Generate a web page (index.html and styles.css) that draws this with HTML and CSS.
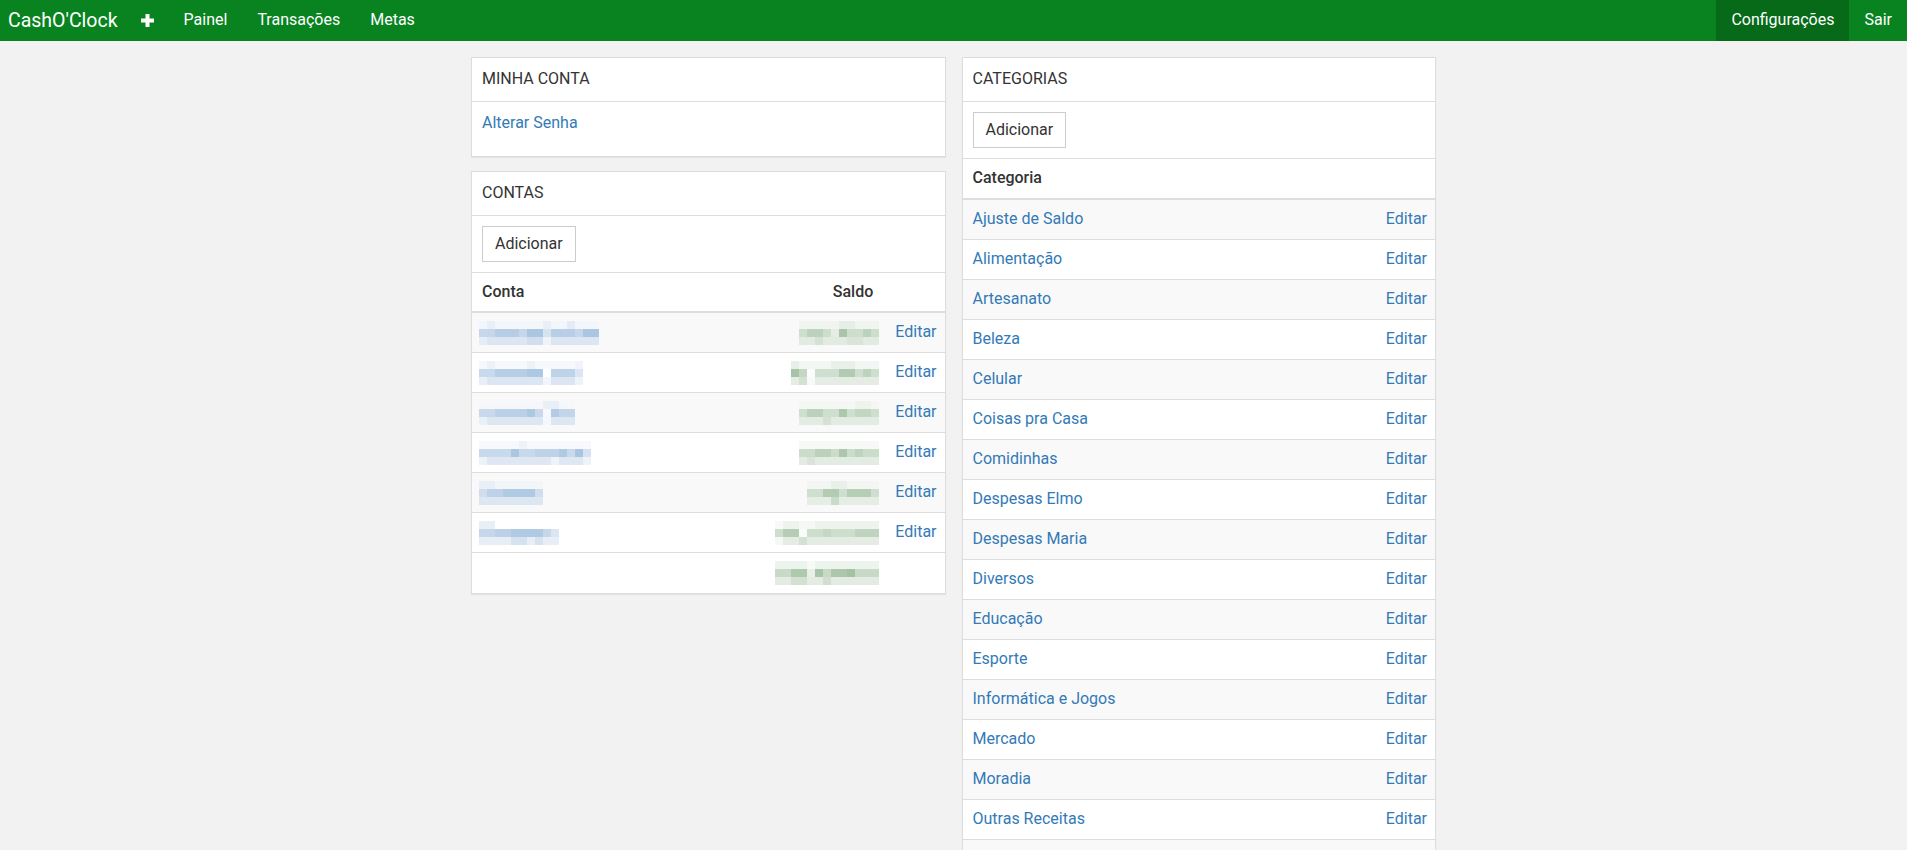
FILE: index.html
```html
<!DOCTYPE html>
<html lang="pt-BR">
<head>
<meta charset="utf-8">
<title>CashO'Clock - Configurações</title>
<link rel="stylesheet" href="styles.css">
</head>
<body>
<nav class="navbar">
  <a class="brand" href="#">CashO'Clock</a>
  <a class="nav-link nav-plus" href="#" aria-label="Novo">
    <svg width="13" height="13" viewBox="0 0 13 13"><rect x="0" y="4.5" width="13" height="4" fill="#fff"/><rect x="4.5" y="0" width="4" height="13" fill="#fff"/></svg>
  </a>
  <a class="nav-link" href="#">Painel</a>
  <a class="nav-link" href="#">Transações</a>
  <a class="nav-link" href="#">Metas</a>
  <div class="nav-right">
    <a class="nav-link active" href="#">Configurações</a>
    <a class="nav-link" href="#">Sair</a>
  </div>
</nav>

<main class="container">
  <div class="col">
    <section class="panel">
      <div class="panel-heading">MINHA CONTA</div>
      <div class="panel-body">
        <p class="body-line"><a href="#">Alterar Senha</a></p>
      </div>
    </section>

    <section class="panel">
      <div class="panel-heading">CONTAS</div>
      <div class="panel-body body-btn">
        <button class="btn">Adicionar</button>
      </div>
      <table class="table">
        <thead>
          <tr><th class="c-name">Conta</th><th class="c-num">Saldo</th><th class="c-act"></th></tr>
        </thead>
        <tbody>
          <tr>
            <td class="c-name"><svg class="px" width="120" height="24"><rect y="0" width="120" height="8" fill="#f3f6fa"/><rect x="8" y="0" width="8" height="8" fill="#e9eff7"/><rect x="64" y="0" width="8" height="8" fill="#e9eff7"/><rect x="88" y="0" width="8" height="8" fill="#e3ebf4"/><rect y="8" width="120" height="8" fill="#c6d7eb"/><rect x="16" y="8" width="24" height="8" fill="#b6cde5"/><rect x="48" y="8" width="16" height="8" fill="#aac6e1"/><rect x="64" y="8" width="8" height="8" fill="#d7e3ef"/><rect x="72" y="8" width="24" height="8" fill="#b8cee6"/><rect x="104" y="8" width="16" height="8" fill="#aac6e1"/><rect y="16" width="120" height="8" fill="#dce6f2"/><rect x="0" y="16" width="8" height="8" fill="#e6edf6"/><rect x="64" y="16" width="8" height="8" fill="#eef3f9"/><rect x="48" y="16" width="16" height="8" fill="#d0deed"/></svg></td>
            <td class="c-num"><svg class="px" width="80" height="24"><rect y="0" width="80" height="8" fill="#f1f5f1"/><rect x="40" y="0" width="16" height="8" fill="#e6eee6"/><rect y="8" width="80" height="8" fill="#cddecd"/><rect x="8" y="8" width="16" height="8" fill="#bcd2bc"/><rect x="32" y="8" width="8" height="8" fill="#e5ede5"/><rect x="40" y="8" width="8" height="8" fill="#a9c5a9"/><rect x="64" y="8" width="8" height="8" fill="#bcd2bc"/><rect y="16" width="80" height="8" fill="#e2ebe2"/><rect x="16" y="16" width="8" height="8" fill="#d4e2d4"/><rect x="48" y="16" width="16" height="8" fill="#d8e5d8"/></svg></td>
            <td class="c-act"><a href="#">Editar</a></td>
          </tr>
          <tr>
            <td class="c-name"><svg class="px" width="104" height="24"><rect y="0" width="104" height="8" fill="#f6f8fb"/><rect x="8" y="0" width="8" height="8" fill="#edf2f8"/><rect x="48" y="0" width="8" height="8" fill="#edf2f8"/><rect x="96" y="0" width="8" height="8" fill="#f0f4f9"/><rect y="8" width="104" height="8" fill="#c8d9eb"/><rect x="16" y="8" width="32" height="8" fill="#b7cee6"/><rect x="48" y="8" width="16" height="8" fill="#adc8e2"/><rect x="64" y="8" width="8" height="8" fill="#ffffff"/><rect x="72" y="8" width="24" height="8" fill="#bed2e8"/><rect x="96" y="8" width="8" height="8" fill="#dce6f2"/><rect y="16" width="104" height="8" fill="#dce6f2"/><rect x="0" y="16" width="8" height="8" fill="#e9eff7"/><rect x="64" y="16" width="8" height="8" fill="#f2f6fa"/><rect x="96" y="16" width="8" height="8" fill="#eef3f9"/></svg></td>
            <td class="c-num"><svg class="px" width="88" height="24"><rect y="0" width="88" height="8" fill="#f3f7f3"/><rect x="0" y="0" width="8" height="8" fill="#e8efe8"/><rect x="40" y="0" width="24" height="8" fill="#e9f0e9"/><rect y="8" width="88" height="8" fill="#cfdfcf"/><rect x="0" y="8" width="8" height="8" fill="#a7c3a7"/><rect x="8" y="8" width="8" height="8" fill="#c4d7c4"/><rect x="16" y="8" width="8" height="8" fill="#fbfcfb"/><rect x="48" y="8" width="16" height="8" fill="#b1cab1"/><rect x="72" y="8" width="8" height="8" fill="#bdd3bd"/><rect y="16" width="88" height="8" fill="#e4ece4"/><rect x="8" y="16" width="8" height="8" fill="#d3e1d3"/><rect x="16" y="16" width="8" height="8" fill="#f7faf7"/></svg></td>
            <td class="c-act"><a href="#">Editar</a></td>
          </tr>
          <tr>
            <td class="c-name"><svg class="px" width="96" height="24"><rect y="0" width="96" height="8" fill="#f5f7fa"/><rect x="64" y="0" width="16" height="8" fill="#e9eff6"/><rect y="8" width="96" height="8" fill="#c9d9eb"/><rect x="16" y="8" width="40" height="8" fill="#bad0e7"/><rect x="48" y="8" width="8" height="8" fill="#adc8e2"/><rect x="64" y="8" width="8" height="8" fill="#f6f8fb"/><rect x="72" y="8" width="8" height="8" fill="#b3cbe4"/><rect x="80" y="8" width="16" height="8" fill="#c2d5e9"/><rect y="16" width="96" height="8" fill="#dde7f2"/><rect x="0" y="16" width="8" height="8" fill="#eaf0f7"/><rect x="64" y="16" width="8" height="8" fill="#f5f8fb"/></svg></td>
            <td class="c-num"><svg class="px" width="80" height="24"><rect y="0" width="80" height="8" fill="#f4f7f4"/><rect x="56" y="0" width="16" height="8" fill="#eef3ee"/><rect y="8" width="80" height="8" fill="#cfdfcf"/><rect x="8" y="8" width="16" height="8" fill="#bbd1bb"/><rect x="40" y="8" width="8" height="8" fill="#aec8ae"/><rect x="56" y="8" width="16" height="8" fill="#c2d6c2"/><rect y="16" width="80" height="8" fill="#e3ece3"/><rect x="24" y="16" width="8" height="8" fill="#d4e2d4"/></svg></td>
            <td class="c-act"><a href="#">Editar</a></td>
          </tr>
          <tr>
            <td class="c-name"><svg class="px" width="112" height="24"><rect y="0" width="112" height="8" fill="#f7f9fc"/><rect x="40" y="0" width="8" height="8" fill="#eef3f9"/><rect y="8" width="112" height="8" fill="#c8d9eb"/><rect x="32" y="8" width="8" height="8" fill="#aac6e1"/><rect x="56" y="8" width="24" height="8" fill="#bed2e8"/><rect x="80" y="8" width="8" height="8" fill="#b0cae3"/><rect x="96" y="8" width="8" height="8" fill="#a8c5e1"/><rect x="104" y="8" width="8" height="8" fill="#d6e2ef"/><rect y="16" width="112" height="8" fill="#dee7f2"/><rect x="0" y="16" width="8" height="8" fill="#edf2f8"/><rect x="72" y="16" width="8" height="8" fill="#eef3f8"/><rect x="104" y="16" width="8" height="8" fill="#eef3f8"/></svg></td>
            <td class="c-num"><svg class="px" width="80" height="24"><rect y="0" width="80" height="8" fill="#f6f9f6"/><rect y="8" width="80" height="8" fill="#cbdccb"/><rect x="16" y="8" width="16" height="8" fill="#bbd1bb"/><rect x="40" y="8" width="8" height="8" fill="#acc7ac"/><rect x="56" y="8" width="8" height="8" fill="#bed3be"/><rect y="16" width="80" height="8" fill="#e3ece3"/><rect x="8" y="16" width="8" height="8" fill="#d7e4d7"/></svg></td>
            <td class="c-act"><a href="#">Editar</a></td>
          </tr>
          <tr>
            <td class="c-name"><svg class="px" width="64" height="24"><rect y="0" width="64" height="8" fill="#f3f6f9"/><rect x="0" y="0" width="16" height="8" fill="#e9eff6"/><rect y="8" width="64" height="8" fill="#bdd2e8"/><rect x="0" y="8" width="8" height="8" fill="#cfddec"/><rect x="24" y="8" width="32" height="8" fill="#b0cae3"/><rect x="56" y="8" width="8" height="8" fill="#cfddec"/><rect y="16" width="64" height="8" fill="#dde7f2"/></svg></td>
            <td class="c-num"><svg class="px" width="72" height="24"><rect y="0" width="72" height="8" fill="#f3f6f3"/><rect x="24" y="0" width="16" height="8" fill="#e9f0e9"/><rect y="8" width="72" height="8" fill="#cfdfcf"/><rect x="16" y="8" width="16" height="8" fill="#b2cbb2"/><rect x="40" y="8" width="24" height="8" fill="#b6ceb6"/><rect y="16" width="72" height="8" fill="#e5ede5"/><rect x="24" y="16" width="8" height="8" fill="#c9dbc9"/></svg></td>
            <td class="c-act"><a href="#">Editar</a></td>
          </tr>
          <tr>
            <td class="c-name"><svg class="px" width="80" height="24"><rect y="0" width="80" height="8" fill="#ffffff"/><rect x="0" y="0" width="16" height="8" fill="#e9eff7"/><rect y="8" width="80" height="8" fill="#c6d7ea"/><rect x="16" y="8" width="16" height="8" fill="#bcd1e7"/><rect x="32" y="8" width="32" height="8" fill="#b1cae3"/><rect x="72" y="8" width="8" height="8" fill="#dce6f2"/><rect y="16" width="80" height="8" fill="#e8eef6"/><rect x="32" y="16" width="16" height="8" fill="#d5e2ef"/><rect x="56" y="16" width="8" height="8" fill="#d6e2ef"/></svg></td>
            <td class="c-num"><svg class="px" width="104" height="24"><rect y="0" width="104" height="8" fill="#eef3ee"/><rect x="0" y="0" width="8" height="8" fill="#f8faf8"/><rect x="24" y="0" width="16" height="8" fill="#f5f8f5"/><rect y="8" width="104" height="8" fill="#cddecd"/><rect x="8" y="8" width="16" height="8" fill="#b5cdb5"/><rect x="24" y="8" width="8" height="8" fill="#fafcfa"/><rect x="48" y="8" width="8" height="8" fill="#c4d7c4"/><rect x="80" y="8" width="24" height="8" fill="#bfd4bf"/><rect y="16" width="104" height="8" fill="#e4ece4"/><rect x="0" y="16" width="8" height="8" fill="#f5f8f5"/><rect x="24" y="16" width="8" height="8" fill="#d2e1d2"/></svg></td>
            <td class="c-act"><a href="#">Editar</a></td>
          </tr>
        </tbody>
        <tfoot>
          <tr>
            <td class="c-name"></td>
            <td class="c-num"><svg class="px" width="104" height="24"><rect y="0" width="104" height="8" fill="#edf3ed"/><rect x="32" y="0" width="8" height="8" fill="#f7faf7"/><rect y="8" width="104" height="8" fill="#c7dac7"/><rect x="16" y="8" width="16" height="8" fill="#afc9af"/><rect x="32" y="8" width="8" height="8" fill="#e8efe8"/><rect x="40" y="8" width="8" height="8" fill="#a9c5a9"/><rect x="56" y="8" width="16" height="8" fill="#adc7ad"/><rect x="72" y="8" width="8" height="8" fill="#a4c1a4"/><rect y="16" width="104" height="8" fill="#e3ebe3"/><rect x="16" y="16" width="16" height="8" fill="#d3e1d3"/><rect x="48" y="16" width="8" height="8" fill="#d0dfd0"/></svg></td>
            <td class="c-act"></td>
          </tr>
        </tfoot>
      </table>
    </section>
  </div>

  <div class="col">
    <section class="panel">
      <div class="panel-heading">CATEGORIAS</div>
      <div class="panel-body body-btn">
        <button class="btn">Adicionar</button>
      </div>
      <table class="table">
        <thead>
          <tr><th class="c-name" colspan="2">Categoria</th></tr>
        </thead>
        <tbody>
          <tr><td class="c-name"><a href="#">Ajuste de Saldo</a></td><td class="c-act"><a href="#">Editar</a></td></tr>
          <tr><td class="c-name"><a href="#">Alimentação</a></td><td class="c-act"><a href="#">Editar</a></td></tr>
          <tr><td class="c-name"><a href="#">Artesanato</a></td><td class="c-act"><a href="#">Editar</a></td></tr>
          <tr><td class="c-name"><a href="#">Beleza</a></td><td class="c-act"><a href="#">Editar</a></td></tr>
          <tr><td class="c-name"><a href="#">Celular</a></td><td class="c-act"><a href="#">Editar</a></td></tr>
          <tr><td class="c-name"><a href="#">Coisas pra Casa</a></td><td class="c-act"><a href="#">Editar</a></td></tr>
          <tr><td class="c-name"><a href="#">Comidinhas</a></td><td class="c-act"><a href="#">Editar</a></td></tr>
          <tr><td class="c-name"><a href="#">Despesas Elmo</a></td><td class="c-act"><a href="#">Editar</a></td></tr>
          <tr><td class="c-name"><a href="#">Despesas Maria</a></td><td class="c-act"><a href="#">Editar</a></td></tr>
          <tr><td class="c-name"><a href="#">Diversos</a></td><td class="c-act"><a href="#">Editar</a></td></tr>
          <tr><td class="c-name"><a href="#">Educação</a></td><td class="c-act"><a href="#">Editar</a></td></tr>
          <tr><td class="c-name"><a href="#">Esporte</a></td><td class="c-act"><a href="#">Editar</a></td></tr>
          <tr><td class="c-name"><a href="#">Informática e Jogos</a></td><td class="c-act"><a href="#">Editar</a></td></tr>
          <tr><td class="c-name"><a href="#">Mercado</a></td><td class="c-act"><a href="#">Editar</a></td></tr>
          <tr><td class="c-name"><a href="#">Moradia</a></td><td class="c-act"><a href="#">Editar</a></td></tr>
          <tr><td class="c-name"><a href="#">Outras Receitas</a></td><td class="c-act"><a href="#">Editar</a></td></tr>
          <tr><td class="c-name"><a href="#">Presentes</a></td><td class="c-act"><a href="#">Editar</a></td></tr>
          <tr><td class="c-name"><a href="#">Salário</a></td><td class="c-act"><a href="#">Editar</a></td></tr>
          <tr><td class="c-name"><a href="#">Saúde</a></td><td class="c-act"><a href="#">Editar</a></td></tr>
          <tr><td class="c-name"><a href="#">Transporte</a></td><td class="c-act"><a href="#">Editar</a></td></tr>
        </tbody>
      </table>
    </section>
  </div>
</main>
</body>
</html>
```

FILE: styles.css
```css
* { box-sizing: border-box; }

html, body {
  margin: 0;
  padding: 0;
}

body {
  background: #f2f2f2;
  font-family: Roboto, "Liberation Sans", Arial, sans-serif;
  font-size: 16px;
  line-height: 1.42857;
  color: #333;
}

a {
  color: #337ab7;
  text-decoration: none;
}

/* Navbar */
.navbar {
  display: flex;
  align-items: stretch;
  height: 41px;
  background: #08831f;
}

.brand {
  display: flex;
  align-items: center;
  padding: 0 8px;
  font-size: 19.5px;
  color: #fff;
}

.nav-link {
  display: flex;
  align-items: center;
  padding: 0 15px;
  color: #fff;
  font-size: 16px;
}

.nav-plus svg { display: block; }

.nav-right {
  margin-left: auto;
  display: flex;
  align-items: stretch;
}

.nav-link.active {
  background: #066a18;
}

/* Layout */
.container {
  width: 965px;
  margin: 16px auto 0;
  display: grid;
  grid-template-columns: 1fr 1fr;
  column-gap: 16px;
  align-items: start;
}

.col {
  display: flex;
  flex-direction: column;
  gap: 14px;
}

/* Panels */
.panel {
  background: #fff;
  border: 1px solid #ddd;
  box-shadow: 0 1px 1px rgba(0, 0, 0, 0.06);
}

.panel-heading {
  padding: 10px;
  border-bottom: 1px solid #ddd;
  color: #333;
}

.panel-body {
  padding: 10px;
}

.body-line {
  margin: 0 0 11px;
}

.body-btn {
  border-bottom: 1px solid #ddd;
}

.btn {
  font-family: inherit;
  font-size: 16px;
  line-height: 1.42857;
  color: #333;
  background: #fff;
  border: 1px solid #ccc;
  border-radius: 0;
  padding: 6px 12px;
  height: 36px;
  cursor: pointer;
}

/* Tables */
.table {
  width: 100%;
  border-collapse: collapse;
  border-spacing: 0;
}

.table th,
.table td {
  padding: 8px 8px 8px 10px;
  line-height: 1.42857;
  vertical-align: middle;
}

.table td {
  height: 40px;
  border-top: 1px solid #ddd;
}

.table th {
  font-weight: 500;
  text-align: left;
  border-bottom: 2px solid #ddd;
}

.table tbody tr:first-child td {
  border-top: 0;
}

.table tbody tr:nth-child(odd) td {
  background: #f9f9f9;
}

.table .c-name {
  width: 100%;
}

.table th.c-num {
  text-align: right;
  white-space: nowrap;
  padding-right: 12px;
}

.table td.c-num {
  text-align: right;
  white-space: nowrap;
  padding-right: 10px;
}

.table .c-act {
  text-align: right;
  white-space: nowrap;
}

.px {
  display: block;
  margin: -0.57px 0 -0.57px -3px;
}

.c-num .px {
  margin-left: auto;
  margin-right: -4px;
}
```
